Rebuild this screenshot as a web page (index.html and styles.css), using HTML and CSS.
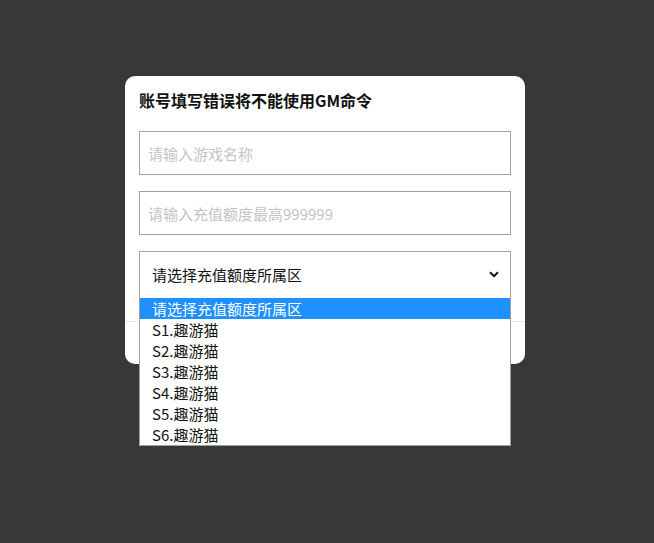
FILE: index.html
```html
<html>
  <head>
    <link rel="stylesheet" href="styles.css">
  </head>
  <body>
    <div class="dialog">
      <h3 class="title">账号填写错误将不能使用GM命令</h3>
      <form class="recharge">
        <input name="game" type="text" placeholder="请输入游戏名称">
        <input name="amount" type="text" placeholder="请输入充值额度最高999999">
        <div class="select-wrap">
          <div class="select-box">
            <span>请选择充值额度所属区</span>
            <svg class="chevron" width="10" height="7" viewBox="0 0 10 7">
              <path d="M1 1.2 L5 5.2 L9 1.2" fill="none" stroke="#111" stroke-width="2"/>
            </svg>
          </div>
          <ul class="options">
            <li class="active">请选择充值额度所属区</li>
            <li>S1.趣游猫</li>
            <li>S2.趣游猫</li>
            <li>S3.趣游猫</li>
            <li>S4.趣游猫</li>
            <li>S5.趣游猫</li>
            <li>S6.趣游猫</li>
          </ul>
        </div>
      </form>
      <div class="footer"></div>
    </div>
  </body>
</html>
```

FILE: styles.css
```css
body {
  margin: 0;
  background-color: #383838;
  font-family: "Microsoft YaHei", "Noto Sans CJK SC", sans-serif;
}

.dialog {
  width: 400px;
  margin: 76px 0 0 125px;
  background-color: white;
  border-radius: 10px;
}

.title {
  margin: 0;
  padding: 13px 14px 0;
  font-size: 16px;
  line-height: 22px;
  font-weight: bold;
  color: #111;
}

.recharge {
  display: flex;
  flex-direction: column;
  gap: 16px;
  padding: 20px 14px 0;
}

.recharge input {
  height: 44px;
  margin: 0;
  padding: 0 8px;
  border: solid 1px #a0a0a0;
  font-family: inherit;
  font-size: 15px;
  outline: none;
}

.recharge input::placeholder {
  color: #c4c4c4;
}

.select-wrap {
  position: relative;
}

.select-box {
  height: 45px;
  box-sizing: border-box;
  border: solid 1px #a0a0a0;
  border-bottom: none;
  display: flex;
  align-items: center;
  justify-content: space-between;
  padding: 0 11px 0 12px;
  font-size: 15px;
  color: #111;
}

.options {
  position: absolute;
  top: 45px;
  left: 0;
  right: 0;
  margin: 0;
  padding: 2px 0 0;
  list-style-type: none;
  background-color: white;
  border: solid 1px #a0a0a0;
  border-top: none;
  z-index: 2;
}

.options li {
  height: 21px;
  line-height: 21px;
  padding-left: 12px;
  font-size: 15px;
  color: #111;
}

.options li.active {
  background-color: #1e90ff;
  color: white;
}

.footer {
  margin-top: 25px;
  height: 42px;
  border-top: solid 1px #e6e6e6;
}
```
